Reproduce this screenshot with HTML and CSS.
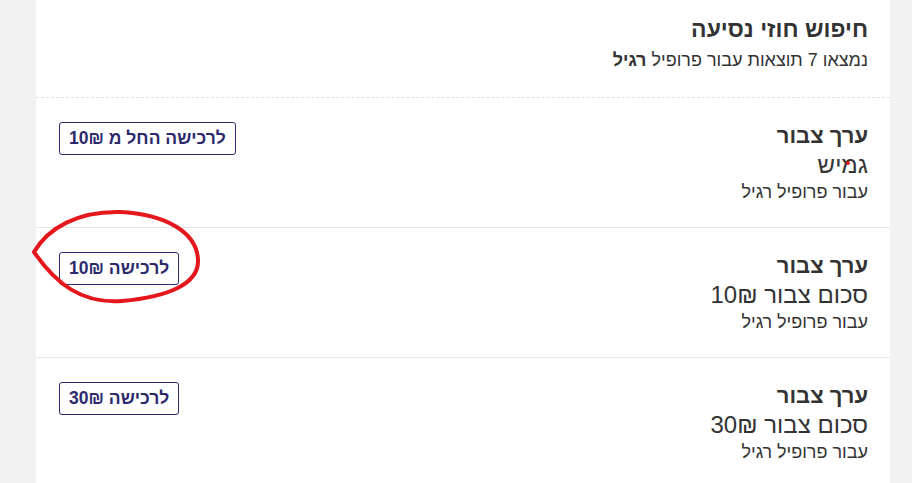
FILE: index.html
```html
<!DOCTYPE html>
<html lang="he" dir="rtl">
<head>
<meta charset="utf-8">
<link rel="stylesheet" href="styles.css">
</head>
<body>
<div class="card">
  <header class="head">
    <h1 class="head-title">חיפוש חוזי נסיעה</h1>
    <p class="head-sub">נמצאו 7 תוצאות עבור פרופיל <b>רגיל</b></p>
  </header>
  <div class="row">
    <div class="info">
      <div class="info-title">ערך צבור</div>
      <div class="info-main">גמיש</div>
      <div class="info-note">עבור פרופיל רגיל</div>
    </div>
    <button class="buy">לרכישה החל מ 10₪</button>
  </div>
  <div class="row">
    <div class="info">
      <div class="info-title">ערך צבור</div>
      <div class="info-main">סכום צבור 10₪</div>
      <div class="info-note">עבור פרופיל רגיל</div>
    </div>
    <button class="buy">לרכישה 10₪</button>
  </div>
  <div class="row last">
    <div class="info">
      <div class="info-title">ערך צבור</div>
      <div class="info-main">סכום צבור 30₪</div>
      <div class="info-note">עבור פרופיל רגיל</div>
    </div>
    <button class="buy">לרכישה 30₪</button>
  </div>
</div>
<svg class="annot" width="912" height="483" viewBox="0 0 912 483">
  <path d="M34,252 C48,228 78,211 120,212 C165,214 197,232 198,260 C199,284 168,297 122,301 C82,304 56,284 34,252 Z" fill="none" stroke="#e3171c" stroke-width="4" stroke-linejoin="round"/>
  <circle cx="848" cy="163" r="2" fill="#e3171c"/>
</svg>
</body>
</html>
```

FILE: styles.css
```css
html, body {
  margin: 0;
  padding: 0;
}
body {
  background: #f2f2f2;
  font-family: "Liberation Sans", Arial, sans-serif;
  color: #333;
  width: 912px;
  height: 483px;
  overflow: hidden;
  position: relative;
}
.card {
  background: #fff;
  margin-right: 22px;
  width: 854px;
  min-height: 483px;
}
.head {
  padding: 15px 22px 0 22px;
  height: 82px;
  border-bottom: 1px dashed #e0e0e0;
}
.head-title {
  margin: 0;
  font-size: 23px;
  font-weight: bold;
  line-height: 28px;
}
.head-sub {
  margin: 4px 0 0 0;
  font-size: 18px;
  line-height: 26px;
}
.head-sub b {
  font-weight: bold;
}
.row {
  display: flex;
  justify-content: space-between;
  align-items: flex-start;
  padding: 23px 22px 0 22px;
  height: 106px;
  border-bottom: 1px solid #e6e6e6;
}
.row.last {
  border-bottom: none;
}
.info-title {
  font-size: 22px;
  font-weight: bold;
  line-height: 30px;
}
.info-main {
  font-size: 24px;
  line-height: 28px;
}
.info-note {
  font-size: 18px;
  line-height: 26px;
}
.buy {
  font-family: "Liberation Sans", Arial, sans-serif;
  font-size: 17.5px;
  font-weight: bold;
  color: #2c2a6c;
  background: #fff;
  border: 1px solid #2c2a6c;
  border-radius: 3px;
  height: 33px;
  padding: 0 9px;
  margin-top: 1px;
  margin-left: 1px;
}
.annot {
  position: absolute;
  left: 0;
  top: 0;
  pointer-events: none;
}
```
